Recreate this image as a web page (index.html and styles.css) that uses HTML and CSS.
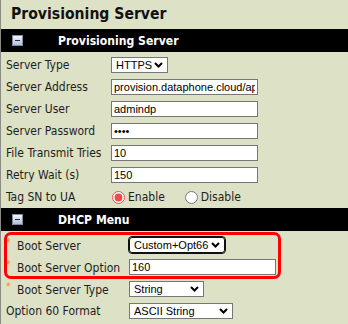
FILE: index.html
```html
<!DOCTYPE html>
<html>
<head>
<meta charset="utf-8">
<link rel="stylesheet" href="styles.css">
</head>
<body>
<div class="page">
  <h1 class="title">Provisioning Server</h1>
  <div class="bar"><span class="toggle"></span><span class="bar-title">Provisioning Server</span></div>
  <div class="section s1">
    <div class="row"><span class="label">Server Type</span><select class="sel sel-type"><option>HTTPS</option></select></div>
    <div class="row"><span class="label">Server Address</span><input class="txt" type="text" value="provision.dataphone.cloud/api/prov"></div>
    <div class="row"><span class="label">Server User</span><input class="txt" type="text" value="admindp"></div>
    <div class="row"><span class="label">Server Password</span><input class="txt" type="password" value="1234"></div>
    <div class="row"><span class="label">File Transmit Tries</span><input class="txt" type="text" value="10"></div>
    <div class="row"><span class="label">Retry Wait (s)</span><input class="txt" type="text" value="150"></div>
    <div class="row"><span class="label">Tag SN to UA</span>
      <label class="radio"><input type="radio" name="tag" checked><span>Enable</span></label>
      <label class="radio r2"><input type="radio" name="tag"><span>Disable</span></label>
    </div>
  </div>
  <div class="bar"><span class="toggle"></span><span class="bar-title">DHCP Menu</span></div>
  <div class="section s2">
    <div class="row"><span class="label"><span class="req">*</span>Boot Server</span><select class="sel sel-boot"><option>Custom+Opt66</option></select></div>
    <div class="row"><span class="label"><span class="req">*</span>Boot Server Option</span><input class="txt" type="text" value="160"></div>
    <div class="row"><span class="label"><span class="req">*</span>Boot Server Type</span><select class="sel sel-btype"><option>String</option></select></div>
    <div class="row"><span class="label">Option 60 Format</span><select class="sel sel-fmt"><option>ASCII String</option></select></div>
    <div class="highlight"></div>
  </div>
</div>
</body>
</html>
```

FILE: styles.css
```css
html, body {
  margin: 0;
  padding: 0;
}
body {
  background: #dde1c6;
  font-family: "DejaVu Sans Condensed", "DejaVu Sans", sans-serif;
  font-size: 12px;
  color: #1e1e1e;
  overflow: hidden;
}
.page {
  border-left: 1px solid #8c8c84;
  min-height: 324px;
}
.title {
  margin: 0;
  height: 29px;
  line-height: 28px;
  padding-left: 10px;
  font-size: 15.6px;
  font-weight: bold;
  color: #111;
}
.bar {
  height: 23px;
  background: #000;
  display: flex;
  align-items: center;
  color: #fff;
  font-weight: bold;
  font-size: 12.1px;
}
.toggle {
  position: relative;
  width: 9px;
  height: 9px;
  margin-left: 11px;
  border: 1px solid #7d8ba8;
  background: linear-gradient(#f3f5fa, #b3c0d8);
}
.toggle::after {
  content: "";
  position: absolute;
  left: 2px;
  top: 4px;
  width: 5px;
  height: 1px;
  background: #2a2f3a;
}
.bar-title {
  margin-left: 35px;
}
.section {
  position: relative;
}
.s1 {
  padding-top: 2px;
}
.s2 {
  padding-top: 3px;
}
.row {
  display: flex;
  align-items: center;
  height: 22px;
  padding-left: 5px;
}
.s1 .label {
  width: 105px;
  flex: none;
}
.s2 .label {
  width: 123px;
  flex: none;
  position: relative;
}
.req {
  display: inline-block;
  width: 11px;
  color: #f39326;
  font-family: "Liberation Sans", Arial, sans-serif;
  font-size: 12px;
  vertical-align: 3px;
  line-height: 1;
}
.txt {
  box-sizing: border-box;
  width: 147px;
  height: 16px;
  margin: 0;
  padding: 0 2px;
  border: 1px solid #767676;
  background: #fff;
  font-family: "Liberation Sans", Arial, sans-serif;
  font-size: 11px;
  color: #000;
}
.sel {
  -webkit-appearance: none;
  appearance: none;
  box-sizing: border-box;
  height: 16px;
  margin: 0;
  padding: 0 0 0 4px;
  border: 1px solid #767676;
  border-radius: 0;
  background-color: #fff;
  background-image: url("data:image/svg+xml,%3Csvg xmlns='http://www.w3.org/2000/svg' width='9' height='6' viewBox='0 0 9 6'%3E%3Cpath d='M1 1l3.5 3.5L8 1' fill='none' stroke='%23000' stroke-width='2'/%3E%3C/svg%3E");
  background-repeat: no-repeat;
  background-position: right 4px center;
  font-family: "Liberation Sans", Arial, sans-serif;
  font-size: 11px;
  line-height: 14px;
  color: #000;
}
.sel-type { width: 57px; }
.sel-boot {
  width: 96px;
  border-color: #101010;
  border-radius: 3px;
  outline: 1px solid #101010;
}
.sel-btype { width: 75px; }
.sel-fmt { width: 104px; }
.radio {
  display: flex;
  align-items: center;
}
.radio input {
  margin: 0 3px 0 1px;
  width: 13px;
  height: 13px;
  accent-color: #f04b4b;
}
.radio.r2 {
  margin-left: 19px;
}
.highlight {
  position: absolute;
  left: 3px;
  top: 1px;
  width: 277px;
  height: 47px;
  box-sizing: border-box;
  border: 3px solid #ff0000;
  border-radius: 7px;
  pointer-events: none;
}
```
